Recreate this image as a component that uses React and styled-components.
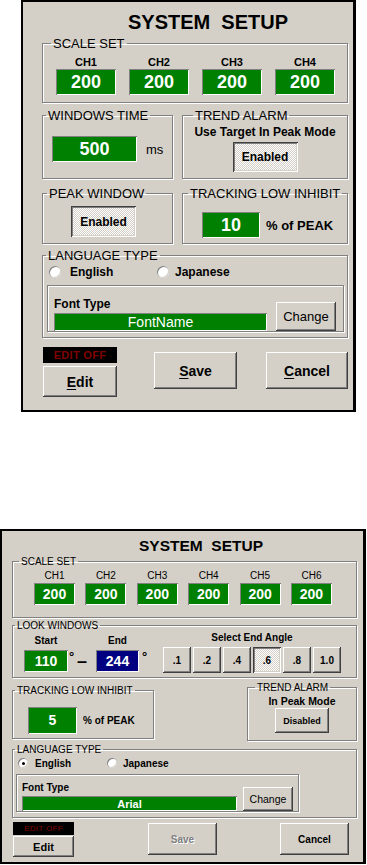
import React from 'react';
import styled, { createGlobalStyle, css } from 'styled-components';

const FACE = '#d4d0c8';

const GlobalStyle = createGlobalStyle`
  html, body {
    margin: 0;
    padding: 0;
    background: #fff;
  }
  body {
    font-family: "Liberation Sans", Arial, sans-serif;
    color: #000;
  }
  * {
    box-sizing: border-box;
  }
`;

// WINDOW FRAME
const Page = styled.div`
  display: flex;
  flex-direction: column;
  width: 367px;
`;

const Dialog = styled.div`
  width: ${(p) => p.$w}px;
  height: ${(p) => p.$h}px;
  margin: ${(p) => p.$m};
  padding: 0 ${(p) => p.$pr}px 0 ${(p) => p.$pl}px;
  background: ${FACE};
  border: 2px solid #000;
  border-right-width: 3px;
  display: flex;
  flex-direction: column;
  flex-shrink: 0;
`;

const Title = styled.div`
  height: ${(p) => p.$h}px;
  padding: ${(p) => p.$pt}px 0 0 ${(p) => p.$shift}px;
  font-size: ${(p) => p.$size}px;
  line-height: ${(p) => p.$lh}px;
  font-weight: 700;
  text-align: center;
  white-space: pre;
  flex-shrink: 0;
`;

// GROUP BOXES
const Group = styled.fieldset`
  margin: ${(p) => p.$mt || 0}px 0 0;
  padding: 0;
  min-width: 0;
  width: ${(p) => (p.$w ? `${p.$w}px` : 'auto')};
  height: ${(p) => p.$h}px;
  flex: ${(p) => (p.$grow ? '1 1 0' : 'none')};
  border: 1px solid #808080;
  box-shadow: inset 1px 1px #fff, 1px 1px #fff;
  display: flex;
  flex-direction: column;
`;

const Legend = styled.legend`
  margin-left: ${(p) => p.$x}px;
  padding: 0 2px;
  font-size: ${(p) => p.$size}px;
  line-height: ${(p) => p.$lh}px;
  white-space: nowrap;
`;

const GroupBody = styled.div`
  flex: 1;
  display: flex;
  flex-direction: ${(p) => p.$dir || 'row'};
  align-items: ${(p) => p.$align || 'flex-start'};
  padding: ${(p) => p.$pad || '0'};
  gap: ${(p) => p.$gap || 0}px;
`;

const GroupRow = styled.div`
  display: flex;
  justify-content: space-between;
  align-items: center;
  gap: ${(p) => p.$gap || 0}px;
  margin-top: ${(p) => p.$mt}px;
  height: ${(p) => p.$h}px;
  flex-shrink: 0;
`;

const Etched = styled.div`
  margin-top: ${(p) => p.$mt}px;
  width: ${(p) => (p.$w ? `${p.$w}px` : 'auto')};
  height: ${(p) => p.$h}px;
  padding: ${(p) => p.$pad};
  border: 1px solid #808080;
  box-shadow: inset 1px 1px #fff, 1px 1px #fff;
  display: grid;
  grid-template-columns: 1fr auto;
  column-gap: ${(p) => p.$gap}px;
  align-items: end;
`;

// CONTROLS
const ChCol = styled.div`
  width: ${(p) => p.$w}px;
  display: flex;
  flex-direction: column;
  align-items: center;
  margin-top: ${(p) => p.$mt || 0}px;
`;

const Label = styled.div`
  font-size: ${(p) => p.$size}px;
  line-height: ${(p) => p.$lh}px;
  font-weight: ${(p) => (p.$bold ? 700 : 400)};
  margin-bottom: ${(p) => p.$mb || 0}px;
  white-space: nowrap;
`;

const ValueBox = styled.div`
  width: ${(p) => (p.$w ? `${p.$w}px` : '100%')};
  height: ${(p) => p.$h}px;
  background: ${(p) => p.$bg || '#008000'};
  color: #fff;
  font-size: ${(p) => p.$size}px;
  font-weight: ${(p) => (p.$thin ? 400 : 700)};
  display: flex;
  align-items: center;
  justify-content: center;
  box-shadow: inset 1px 1px #808080, inset -1px -1px #fff;
  flex-shrink: 0;
`;

const Btn = styled.button`
  width: ${(p) => p.$w}px;
  height: ${(p) => p.$h}px;
  margin: ${(p) => p.$m || 0};
  padding: 0;
  border: none;
  border-radius: 0;
  font-family: inherit;
  font-size: ${(p) => p.$size}px;
  font-weight: ${(p) => (p.$bold ? 700 : 400)};
  color: #000;
  background: ${FACE};
  box-shadow: inset -1px -1px #404040, inset 1px 1px #fff, inset -2px -2px #808080, inset 2px 2px ${FACE};
  flex-shrink: 0;
  cursor: default;
  ${(p) =>
    p.$pressed &&
    css`
      background: repeating-conic-gradient(#fff 0 25%, ${FACE} 0 50%) 0 0 / 2px 2px;
      box-shadow: inset 1px 1px #404040, inset -1px -1px #fff, inset 2px 2px #808080, inset -2px -2px ${FACE};
    `}
  &:disabled {
    color: #808080;
    text-shadow: 1px 1px #fff;
  }
  u {
    text-underline-offset: 2px;
  }
`;

const RadioRow = styled.div`
  display: flex;
  height: 14px;
  padding-left: 2px;
  flex-shrink: 0;
`;

const Radio = styled.label`
  width: ${(p) => p.$w}px;
  display: flex;
  align-items: center;
  gap: ${(p) => p.$gap}px;
  font-size: ${(p) => p.$size}px;
  font-weight: 700;
`;

const RadioDot = styled.span`
  width: ${(p) => p.$d}px;
  height: ${(p) => p.$d}px;
  border-radius: 50%;
  background: #fff;
  box-shadow: inset 1px 1px #808080, inset -1px -1px ${FACE};
  display: flex;
  align-items: center;
  justify-content: center;
  flex-shrink: 0;
  &::after {
    content: '';
    width: ${(p) => Math.round(p.$d / 3)}px;
    height: ${(p) => Math.round(p.$d / 3)}px;
    border-radius: 50%;
    background: ${(p) => (p.$on ? '#000' : 'transparent')};
  }
`;

const Unit = styled.span`
  font-size: ${(p) => p.$size}px;
  font-weight: ${(p) => (p.$bold ? 700 : 400)};
  white-space: nowrap;
`;

const Mark = styled.span`
  width: ${(p) => p.$w}px;
  height: ${(p) => p.$h}px;
  margin: ${(p) => p.$m};
  font-size: ${(p) => p.$size}px;
  line-height: ${(p) => p.$lh}px;
  font-weight: 700;
  text-align: center;
  flex-shrink: 0;
`;

const AngleRow = styled.div`
  display: flex;
  gap: 2px;
  margin-top: 3px;
`;

const Footer = styled.div`
  display: flex;
  align-items: flex-start;
  margin-top: ${(p) => p.$mt}px;
  padding-left: 1px;
  flex-shrink: 0;
`;

const EditCol = styled.div`
  display: flex;
  flex-direction: column;
  gap: ${(p) => p.$gap}px;
`;

const Lamp = styled.div`
  width: ${(p) => p.$w}px;
  height: ${(p) => p.$h}px;
  background: #000;
  color: #800000;
  font-size: ${(p) => p.$size}px;
  font-weight: ${(p) => (p.$bold ? 700 : 400)};
  display: flex;
  align-items: center;
  justify-content: center;
  letter-spacing: 0.3px;
`;

const channels = ['CH1', 'CH2', 'CH3', 'CH4'];
const channels6 = ['CH1', 'CH2', 'CH3', 'CH4', 'CH5', 'CH6'];
const angles = ['.1', '.2', '.4', '.6', '.8', '1.0'];

const SetupFour = () => (
  <Dialog $w={335} $h={412} $m="0 0 0 21px" $pl={19} $pr={5}>
    <Title $h={34} $pt={6} $lh={28} $size={20} $shift={26}>
      {'SYSTEM  SETUP'}
    </Title>

    <Group $h={67}>
      <Legend $x={8} $size={13} $lh={15}>SCALE SET</Legend>
      <GroupBody $pad="5px 0 0 13px" $gap={13}>
        {channels.map((ch) => (
          <ChCol key={ch} $w={60}>
            <Label $size={11} $lh={13} $bold>{ch}</Label>
            <ValueBox $w={60} $h={26} $size={18}>200</ValueBox>
          </ChCol>
        ))}
      </GroupBody>
    </Group>

    <GroupRow $mt={5} $h={71} $gap={9}>
      <Group $w={131} $h={71}>
        <Legend $x={3} $size={13} $lh={15}>WINDOWS TIME</Legend>
        <GroupBody $align="center" $pad="0 0 3px 9px" $gap={9}>
          <ValueBox $w={85} $h={26} $size={18}>500</ValueBox>
          <Unit $size={13}>ms</Unit>
        </GroupBody>
      </Group>
      <Group $grow $h={71}>
        <Legend $x={10} $size={13} $lh={15}>TREND ALARM</Legend>
        <GroupBody $dir="column" $align="center" $pad="2px 0 0">
          <Label $size={12} $lh={14} $bold $mb={3}>Use Target In Peak Mode</Label>
          <Btn $w={65} $h={30} $size={12} $bold $pressed>Enabled</Btn>
        </GroupBody>
      </Group>
    </GroupRow>

    <GroupRow $mt={7} $h={58} $gap={9}>
      <Group $w={131} $h={58}>
        <Legend $x={4} $size={13} $lh={15}>PEAK WINDOW</Legend>
        <GroupBody $pad="5px 0 0 28px">
          <Btn $w={65} $h={31} $size={12} $bold $pressed>Enabled</Btn>
        </GroupBody>
      </Group>
      <Group $grow $h={58}>
        <Legend $x={5} $size={13} $lh={15}>TRACKING LOW INHIBIT</Legend>
        <GroupBody $align="center" $pad="6px 0 0 19px" $gap={6}>
          <ValueBox $w={58} $h={26} $size={18}>10</ValueBox>
          <Unit $size={13} $bold>% of PEAK</Unit>
        </GroupBody>
      </Group>
    </GroupRow>

    <Group $mt={4} $h={90}>
      <Legend $x={3} $size={13} $lh={15}>LANGUAGE TYPE</Legend>
      <GroupBody $dir="column" $align="stretch" $pad="2px 3px 0 4px">
        <RadioRow>
          <Radio $w={108} $gap={9} $size={12}>
            <RadioDot $d={12} />
            English
          </Radio>
          <Radio $w={120} $gap={6} $size={12}>
            <RadioDot $d={12} />
            Japanese
          </Radio>
        </RadioRow>
        <Etched $mt={6} $h={47} $pad="3px 7px 0 6px" $gap={9}>
          <div>
            <Label $size={12} $lh={14} $bold $mb={2}>Font Type</Label>
            <ValueBox $h={18} $size={14} $thin>FontName</ValueBox>
          </div>
          <Btn $w={60} $h={29} $size={13}>Change</Btn>
        </Etched>
      </GroupBody>
    </Group>

    <Footer $mt={9}>
      <EditCol $gap={3}>
        <Lamp $w={74} $h={16} $size={11} $bold>EDIT OFF</Lamp>
        <Btn $w={74} $h={31} $size={14} $bold>
          <u>E</u>dit
        </Btn>
      </EditCol>
      <Btn $w={83} $h={37} $size={14} $bold $m="5px 0 0 37px">
        <u>S</u>ave
      </Btn>
      <Btn $w={82} $h={37} $size={14} $bold $m="5px 0 0 29px">
        <u>C</u>ancel
      </Btn>
    </Footer>
  </Dialog>
);

const SetupSix = () => (
  <Dialog $w={366} $h={335} $m="117px 0 0 0" $pl={10} $pr={6}>
    <Title $h={24} $pt={6} $lh={18} $size={15.5} $shift={33}>
      {'SYSTEM  SETUP'}
    </Title>

    <Group $h={63}>
      <Legend $x={6} $size={10} $lh={13}>SCALE SET</Legend>
      <GroupBody $pad="2px 0 0 21px" $gap={10.4}>
        {channels6.map((ch) => (
          <ChCol key={ch} $w={41}>
            <Label $size={10} $lh={12} $mb={1}>{ch}</Label>
            <ValueBox $w={41} $h={22} $size={14}>200</ValueBox>
          </ChCol>
        ))}
      </GroupBody>
    </Group>

    <Group $mt={1} $h={59}>
      <Legend $x={2} $size={10} $lh={13}>LOOK WINDOWS</Legend>
      <GroupBody $pad="0 0 0 11px">
        <ChCol $w={44} $mt={3}>
          <Label $size={10} $lh={12} $bold $mb={3}>Start</Label>
          <ValueBox $w={44} $h={22} $size={14}>110</ValueBox>
        </ChCol>
        <Mark $w={5} $h={22} $m="18px 0 0 1px" $size={13} $lh={13}>°</Mark>
        <Mark $w={10} $h={22} $m="18px 0 0 3px" $size={18} $lh={22}>–</Mark>
        <ChCol $w={43} $mt={3} style={{ marginLeft: 9 }}>
          <Label $size={10} $lh={12} $bold $mb={3}>End</Label>
          <ValueBox $w={43} $h={22} $size={14} $bg="#000080">244</ValueBox>
        </ChCol>
        <Mark $w={5} $h={22} $m="18px 0 0 3px" $size={13} $lh={13}>°</Mark>
        <ChCol $w={178} style={{ marginLeft: 16 }}>
          <Label $size={10} $lh={12} $bold>Select End Angle</Label>
          <AngleRow>
            {angles.map((a) => (
              <Btn key={a} $w={28} $h={26} $size={10} $bold $pressed={a === '.6'}>
                {a}
              </Btn>
            ))}
          </AngleRow>
        </ChCol>
      </GroupBody>
    </Group>

    <GroupRow $mt={3} $h={60}>
      <Group $w={142} $h={55}>
        <Legend $x={2} $size={10} $lh={13}>TRACKING LOW INHIBIT</Legend>
        <GroupBody $align="center" $pad="6px 0 0 15px" $gap={6}>
          <ValueBox $w={49} $h={27} $size={14}>5</ValueBox>
          <Unit $size={10} $bold>% of PEAK</Unit>
        </GroupBody>
      </Group>
      <Group $w={110} $h={60}>
        <Legend $x={7} $size={10} $lh={13}>TREND ALARM</Legend>
        <GroupBody $dir="column" $align="center" $pad="1px 0 0">
          <Label $size={10.5} $lh={12} $bold $mb={1}>In Peak Mode</Label>
          <Btn $w={54} $h={25} $size={9} $bold>Disabled</Btn>
        </GroupBody>
      </Group>
    </GroupRow>

    <Group $mt={2} $h={75}>
      <Legend $x={2} $size={10} $lh={13}>LANGUAGE TYPE</Legend>
      <GroupBody $dir="column" $align="flex-start" $pad="0 0 0 3px">
        <RadioRow>
          <Radio $w={89} $gap={7} $size={10}>
            <RadioDot $d={10} $on />
            English
          </Radio>
          <Radio $w={100} $gap={6} $size={10}>
            <RadioDot $d={10} />
            Japanese
          </Radio>
        </RadioRow>
        <Etched $mt={4} $w={283} $h={38} $pad="2px 5px 0 5px" $gap={6}>
          <div>
            <Label $size={10} $lh={12} $bold $mb={2}>Font Type</Label>
            <ValueBox $h={15} $size={11}>Arial</ValueBox>
          </div>
          <Btn $w={50} $h={24} $size={10.5}>Change</Btn>
        </Etched>
      </GroupBody>
    </Group>

    <Footer $mt={4}>
      <EditCol $gap={1}>
        <Lamp $w={61} $h={13} $size={8}>EDIT OFF</Lamp>
        <Btn $w={61} $h={21} $size={11} $bold>Edit</Btn>
      </EditCol>
      <Btn $w={69} $h={32} $size={10} $bold $m="1px 0 0 74px" disabled>
        Save
      </Btn>
      <Btn $w={69} $h={32} $size={10} $bold $m="1px 0 0 63px">
        Cancel
      </Btn>
    </Footer>
  </Dialog>
);

const App = () => (
  <>
    <GlobalStyle />
    <Page>
      <SetupFour />
      <SetupSix />
    </Page>
  </>
);

export default App;
